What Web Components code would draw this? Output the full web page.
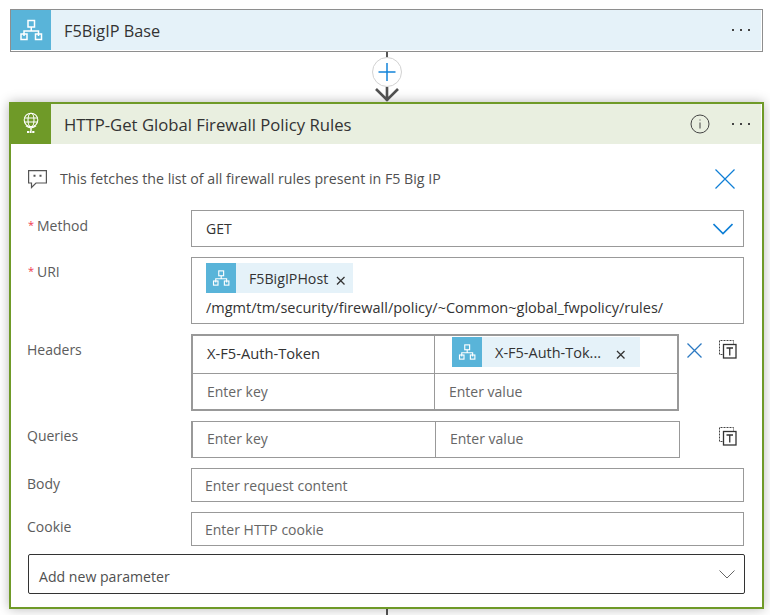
<!DOCTYPE html>
<html>
<head>
<meta charset="utf-8">
<title>Logic app designer</title>
<style>
html, body { margin: 0; padding: 0; background: #fff; overflow: hidden; }
body {
  height: 615px;
  padding: 9px 0 0 9px;
  box-sizing: border-box;
  width: 770px;
  font-family: "Open Sans", "Liberation Sans", sans-serif;
  color: #333;
}
</style>
</head>
<body>

<flow-card title="F5BigIP Base" kind="base"></flow-card>
<flow-connector></flow-connector>
<flow-card title="HTTP-Get Global Firewall Policy Rules" kind="http" open>
  <note-row>This fetches the list of all firewall rules present in F5 Big IP</note-row>

  <form-row label="Method" required gap="10">
    <text-box height="37" chevron>GET</text-box>
  </form-row>

  <form-row label="URI" required gap="10" offset="5">
    <text-box height="67" stacked>
      <api-token label="F5BigIPHost"></api-token>
      <div>/mgmt/tm/security/firewall/policy/~Common~global_fwpolicy/rules/</div>
    </text-box>
  </form-row>

  <form-row label="Headers" gap="10">
    <kv-table heavy removable>
      <kv-cell class="first">X-F5-Auth-Token</kv-cell>
      <kv-cell class="chip"><api-token label="X-F5-Auth-Tok..." wide></api-token></kv-cell>
      <kv-cell placeholder>Enter key</kv-cell>
      <kv-cell placeholder>Enter value</kv-cell>
    </kv-table>
  </form-row>

  <form-row label="Queries" gap="10" offset="5">
    <kv-table>
      <kv-cell class="lift" placeholder>Enter key</kv-cell>
      <kv-cell class="lift" placeholder>Enter value</kv-cell>
    </kv-table>
  </form-row>

  <form-row label="Body" gap="10">
    <text-box height="34" placeholder>Enter request content</text-box>
  </form-row>

  <form-row label="Cookie" gap="8" offset="5">
    <text-box height="34" placeholder>Enter HTTP cookie</text-box>
  </form-row>

  <add-param>Add new parameter</add-param>
</flow-card>
<flow-stub></flow-stub>

<script>
const network = (size, color) => `
<svg width="${size}" height="${size}" viewBox="0 0 40 40" fill="none" stroke="${color}" stroke-width="1.5">
  <rect x="17" y="10.5" width="6.5" height="6.5"/>
  <path d="M20.25 17v4M13 26v-5h14.5v5"/>
  <rect x="10" y="24" width="6" height="5.5"/>
  <rect x="24.5" y="24" width="6" height="5.5"/>
</svg>`

const globe = `
<svg width="40" height="40" viewBox="0 0 40 40" fill="none" stroke="#fff" stroke-width="1.1">
  <circle cx="20" cy="16" r="6.800"/>
  <ellipse cx="20" cy="16" rx="3" ry="6.800"/>
  <path d="M13.400 14h13.200M13.400 18h13.200"/>
  <path d="M15 21.800c1.500 1.300 3.200 2 5 2s3.500-.7 5-2" stroke-width="1.300"/>
  <path d="M20 24v3" stroke-width="1.400"/>
  <path d="M16 28h8" stroke-width="1.800" stroke-dasharray="2 .6"/>
</svg>`

const dots = `
<svg width="18" height="4" viewBox="0 0 18 4" fill="#444">
  <rect x="0" y="1" width="2" height="2"/>
  <rect x="8" y="1" width="2" height="2"/>
  <rect x="16" y="1" width="2" height="2"/>
</svg>`

const info = `
<svg width="20" height="20" viewBox="0 0 20 20" fill="none" stroke="#444">
  <circle cx="10" cy="10" r="9"/>
  <path d="M10 8.500v6"/>
  <rect x="9.500" y="5.500" width="1" height="1" fill="#444" stroke="none"/>
</svg>`

const cross = (size, color, width) => `
<svg width="${size}" height="${size}" viewBox="0 0 ${size} ${size}" fill="none" stroke="${color}" stroke-width="${width}">
  <path d="M.5.5L${size - .5} ${size - .5}M${size - .5} .5L.5 ${size - .5}"/>
</svg>`

const copyText = `
<svg width="18" height="19" viewBox="0 0 18 19" fill="none" stroke="#333" stroke-width="1">
  <path d="M3.500 14.500H.5V.5h14v3" stroke="#444" stroke-dasharray="2 1"/>
  <rect x="4.500" y="4.500" width="12.500" height="13.500" stroke-width="1.300"/>
  <path d="M7.500 8h6.500M10.750 8v7.500" stroke-width="1.300"/>
</svg>`

class FlowCard extends HTMLElement {
  constructor() {
    super()
    this.attachShadow({ mode: "open" })
  }

  connectedCallback() {
    const http = this.getAttribute("kind") === "http"
    const icon = http ? globe : network(40, "#fff")
    this.shadowRoot.innerHTML = `
    <style>
      :host {
        display: block;
        box-sizing: border-box;
        background: #fff;
        position: relative;
      }
      :host([kind="base"]) {
        width: 753px;
        height: 43px;
        margin-left: 1px;
        border: 1px solid #8e8e8e;
        padding: 0 1px 1px 0;
      }
      :host([kind="http"]) {
        width: 755px;
        height: 507px;
        border: 2px solid #6f9a28;
        box-shadow: 0 0 11px rgba(0, 0, 0, .28);
      }
      header {
        display: flex;
        align-items: center;
        height: 40px;
        background: #e5f2f9;
      }
      :host([kind="http"]) header {
        background: #e9efe0;
        margin-right: 1px;
      }
      .icon {
        width: 40px;
        height: 40px;
        flex: none;
        background: #59b4d9;
      }
      :host([kind="http"]) .icon { background: #6f9a28; }
      svg { display: block; }
      h2 {
        flex: 1;
        margin: 0 0 0 13px;
        padding-top: 1px;
        font-size: 16.300px;
        font-weight: 400;
        color: #333;
      }
      :host([kind="http"]) h2 { font-size: 16.700px; }
      .info { margin-right: 22px; }
      .dots { margin-right: 11px; }
      main { padding: 0 18px 0 16px; }
    </style>
    <header>
      <div class="icon">${icon}</div>
      <h2>${this.getAttribute("title")}</h2>
      ${http ? `<div class="info">${info}</div>` : ""}
      <div class="dots">${dots}</div>
    </header>
    ${this.hasAttribute("open") ? "<main><slot></slot></main>" : ""}`
  }
}

class FlowConnector extends HTMLElement {
  constructor() {
    super()
    this.attachShadow({ mode: "open" }).innerHTML = `
    <style>
      :host {
        display: flex;
        justify-content: center;
        width: 755px;
        height: 50px;
        position: relative;
        z-index: 1;
      }
      svg { display: block; }
    </style>
    <svg width="36" height="50" viewBox="0 0 36 50" fill="none">
      <path d="M18 0v6" stroke="#555" stroke-width="2"/>
      <circle cx="18" cy="20" r="14.500" fill="#fff" stroke="#d2d2d2"/>
      <path d="M18 11v18M9.500 20h17" stroke="#1384d9" stroke-width="1.500"/>
      <path d="M18 35v14M7 37l11 11 11-11" stroke="#505050" stroke-width="2.600"/>
    </svg>`
  }
}

class FlowStub extends HTMLElement {
  constructor() {
    super()
    this.attachShadow({ mode: "open" }).innerHTML = `
    <style>
      :host { display: flex; justify-content: center; width: 755px; height: 6px; }
      div { width: 2px; height: 6px; background: #555; }
    </style>
    <div></div>`
  }
}

class NoteRow extends HTMLElement {
  constructor() {
    super()
    this.attachShadow({ mode: "open" }).innerHTML = `
    <style>
      :host {
        display: flex;
        align-items: center;
        height: 66px;
        padding-top: 3px;
        box-sizing: border-box;
        margin-right: 9px;
        font-size: 14.200px;
        color: #505050;
      }
      svg { display: block; flex: none; }
      .text { flex: 1; margin-left: 13px; }
      .comment { margin-left: 1px; margin-top: 1px; }
    </style>
    <svg class="comment" width="19" height="19" viewBox="0 0 19 19" fill="none" stroke="#555" stroke-width="1.200">
      <path d="M.6.6h17.800v12.400H8l-4.500 4.500v-4.500H.6z"/>
      <path d="M6.500 4.800v2M12.500 4.800v2" stroke-width="2"/>
    </svg>
    <div class="text"><slot></slot></div>
    ${cross(20, "#0f7fd6", 1.2)}`
  }
}

class FormRow extends HTMLElement {
  constructor() {
    super()
    const shadow = this.attachShadow({ mode: "open" })
    const gap = this.getAttribute("gap") || 10
    const offset = this.getAttribute("offset") || 6
    shadow.innerHTML = `
    <style>
      :host {
        display: grid;
        grid-template-columns: 164px 1fr;
        margin-bottom: ${gap}px;
      }
      .label {
        padding-top: ${offset}px;
        line-height: 20px;
        font-size: 14px;
        color: #5c5c5c;
      }
      .star {
        display: inline-block;
        width: 10px;
        padding-left: 1px;
        box-sizing: border-box;
        font-size: 11px;
        color: #f0374e;
        vertical-align: 2px;
        line-height: 10px;
      }
    </style>
    <div class="label">${this.hasAttribute("required") ? '<span class="star">*</span>' : ""}${this.getAttribute("label")}</div>
    <div><slot></slot></div>`
  }
}

class TextBox extends HTMLElement {
  constructor() {
    super()
    const shadow = this.attachShadow({ mode: "open" })
    const chevron = this.hasAttribute("chevron") ? `
    <svg width="20" height="12" viewBox="0 0 20 12" fill="none" stroke="#0f7fd6" stroke-width="1.600"><path d="M.5 1l9.500 9.500L19.500 1"/></svg>` : ""
    shadow.innerHTML = `
    <style>
      :host {
        display: flex;
        align-items: center;
        justify-content: space-between;
        box-sizing: border-box;
        height: ${this.getAttribute("height")}px;
        border: 1px solid #999;
        padding: 0 10px 0 14px;
        font-size: 14px;
        color: #333;
      }
      :host([placeholder]) { color: #666; padding-left: 13px; padding-top: 1px; }
      :host([stacked]) {
        display: block;
        padding-top: 5px;
        font-size: 14.500px;
      }
      :host([stacked]) ::slotted(div) { margin-top: 6px; line-height: 18px; }
    </style>
    <div><slot></slot></div>
    ${chevron}`
  }
}

class ApiToken extends HTMLElement {
  constructor() {
    super()
    this.attachShadow({ mode: "open" }).innerHTML = `
    <style>
      :host {
        display: flex;
        align-items: center;
        width: 147px;
        height: 30px;
        background: #e5f2f9;
        font-size: 14.200px;
        color: #333;
      }
      :host([wide]) { width: 188px; font-size: 14.500px; }
      .icon { width: 30px; height: 30px; background: #59b4d9; flex: none; }
      svg { display: block; }
      .label { margin-left: 13px; white-space: nowrap; flex: 1; }
      .close { margin: 4px 6px 0 0; flex: none; }
      :host([wide]) .close { margin-right: 13px; }
    </style>
    <div class="icon">${network(30, "#fff")}</div>
    <div class="label">${this.getAttribute("label")}</div>
    <svg class="close" width="12" height="12" viewBox="0 0 12 12" stroke="#333" stroke-width="1.300"><path d="M2 3l7.500 7.500M9.500 3L2 10.500"/></svg>`
  }
}

class KvTable extends HTMLElement {
  constructor() {
    super()
    const heavy = this.hasAttribute("heavy")
    this.attachShadow({ mode: "open" }).innerHTML = `
    <style>
      :host {
        display: flex;
        align-items: flex-start;
      }
      .grid {
        display: grid;
        box-sizing: border-box;
        grid-template-columns: 242px 1fr;
        width: 489px;
        height: 37px;
        border: 1px solid #999;
        border-left-width: 2px;
      }
      :host([heavy]) .grid {
        grid-template-columns: 241px 1fr;
        grid-template-rows: 37px 36px;
        width: 488px;
        height: 77px;
        border-width: 2px;
      }
      svg { display: block; }
      .remove { margin: 9px 17px 0 8px; flex: none; }
      .copy { margin-top: 6px; flex: none; }
      .alone { margin-left: 39px; margin-top: 6px; flex: none; }
    </style>
    <div class="grid"><slot></slot></div>
    ${heavy ? `<div class="remove">${cross(15, "#2b79c2", 1.3)}</div><div class="copy">${copyText}</div>`
            : `<div class="alone">${copyText}</div>`}`
  }
}

class KvCell extends HTMLElement {
  constructor() {
    super()
    this.attachShadow({ mode: "open" }).innerHTML = `
    <style>
      :host {
        display: flex;
        align-items: center;
        box-sizing: border-box;
        padding-left: 14px;
        font-size: 14px;
        color: #333;
      }
      :host(:nth-child(even)) { border-left: 1px solid #999; }
      :host(:nth-child(n+3)) { border-top: 1px solid #999; }
      :host([placeholder]) { color: #666; }
      :host(.first) { font-size: 14.700px; padding-bottom: 3px; }
      :host(.lift) { padding-bottom: 2px; }
      :host(.chip) { padding-left: 17px; padding-top: 1px; align-items: flex-start; }
    </style>
    <slot></slot>`
  }
}

class AddParam extends HTMLElement {
  constructor() {
    super()
    this.attachShadow({ mode: "open" }).innerHTML = `
    <style>
      :host {
        display: flex;
        align-items: center;
        justify-content: space-between;
        box-sizing: border-box;
        width: 717px;
        height: 40px;
        margin-left: 1px;
        padding: 5px 9px 0 10px;
        border: 1px solid #333;
        border-radius: 2px;
        font-size: 14.100px;
        color: #505050;
      }
      svg { display: block; margin-top: -5px; }
    </style>
    <div><slot></slot></div>
    <svg width="16" height="9" viewBox="0 0 16 9" fill="none" stroke="#666"><path d="M.5.5l7.500 7.500L15.500.5"/></svg>`
  }
}

window.customElements.define("flow-card", FlowCard)
window.customElements.define("flow-connector", FlowConnector)
window.customElements.define("flow-stub", FlowStub)
window.customElements.define("note-row", NoteRow)
window.customElements.define("form-row", FormRow)
window.customElements.define("text-box", TextBox)
window.customElements.define("api-token", ApiToken)
window.customElements.define("kv-table", KvTable)
window.customElements.define("kv-cell", KvCell)
window.customElements.define("add-param", AddParam)
</script>
</body>
</html>
